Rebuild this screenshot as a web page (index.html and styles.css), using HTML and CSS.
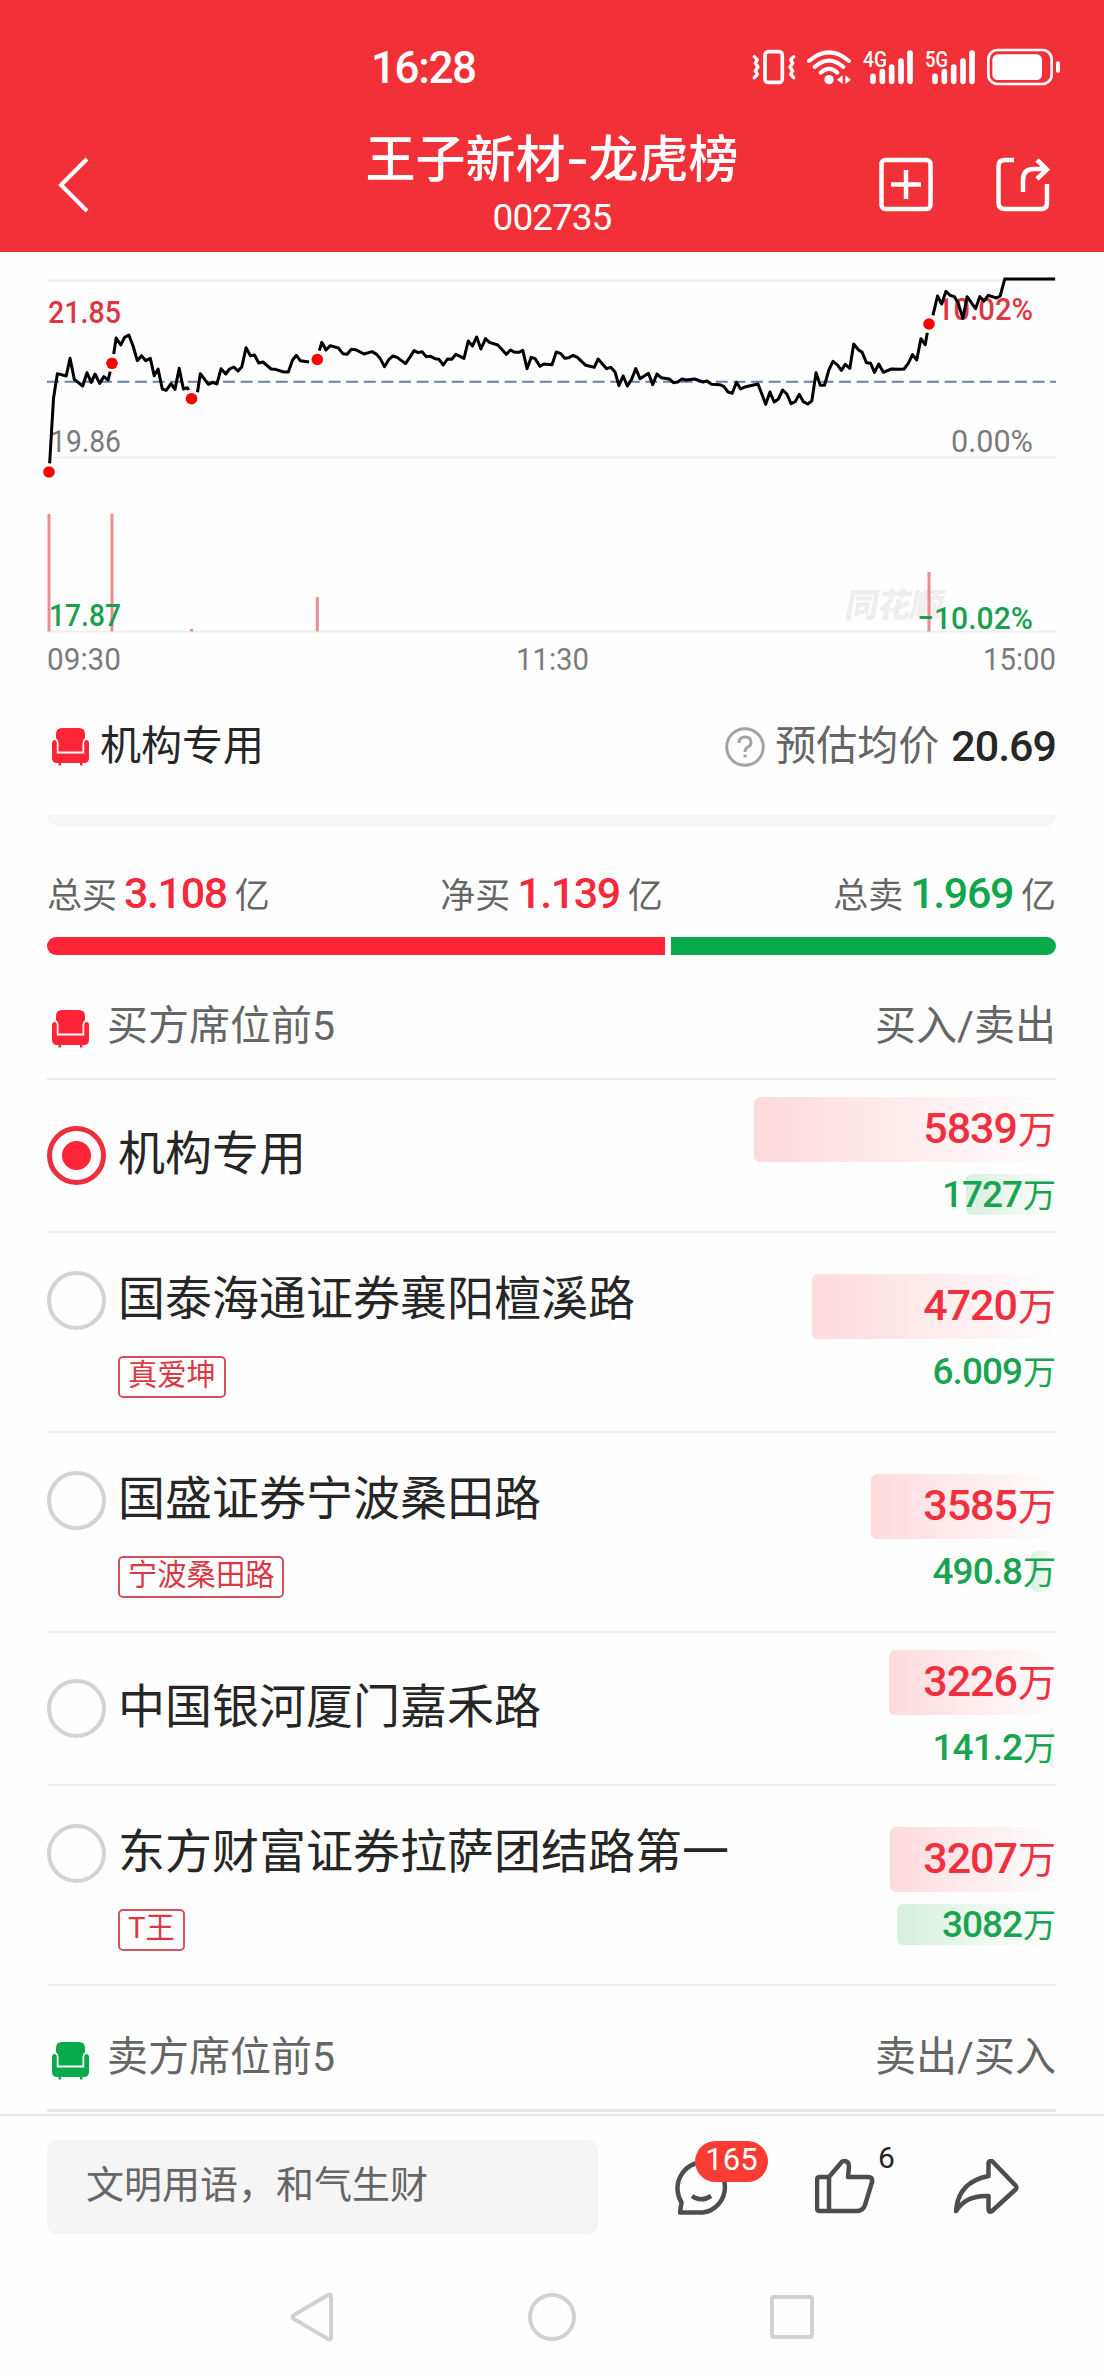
FILE: index.html
```
<!DOCTYPE html>
<html lang="zh-CN">
<head>
    <meta charset="UTF-8">
    <meta name="viewport" content="width=device-width, initial-scale=1.0">
    <title>王子新材-龙虎榜</title>
    <link rel="stylesheet" href="styles.css">
</head>
<body>
    <!-- shared armchair icon -->
    <svg class="defs" width="0" height="0">
        <symbol id="chair" viewBox="0 0 37 38">
            <path d="M4 10V6Q4 0 10 0H27Q33 0 33 6V10Q30.500 12 30.500 15V23.500H6.500V15Q6.500 12 4 10Z"/>
            <path d="M0 15.500Q0 12 2.500 12Q4.800 12 4.800 15.500V25.500H32.200V15.500Q32.200 12 34.500 12Q37 12 37 15.500V30Q37 35 32 35H30.500V37.500H28V35H9V37.500H6.500V35H5Q0 35 0 30Z"/>
        </symbol>
    </svg>

    <header class="header">
        <div class="status-bar">
            <span class="time">16:28</span>
            <svg class="status-icons" viewBox="36 50 930 124">
                <g fill="none" stroke="#fff" stroke-linecap="round" stroke-linejoin="round">
                    <rect x="75" y="66" width="52" height="92" rx="10" stroke-width="11"/>
                    <path d="M43 81l9 9-6 11 8 11-8 11 6 11-9 10M161 81l-9 9 6 11-8 11 8 11-6 11 9 10" stroke-width="10"/>
                    <path d="M207 94Q267 42 327 94M224 112Q267 74 310 112M242 129Q267 106 292 129" stroke-width="12"/>
                    <path d="M399 140v15M427 126v29M455 112v43M483 94v61M510 70v85M585 140v15M613 126v29M641 112v43M669 94v61M696 70v85" stroke-width="17"/>
                    <rect x="745" y="61" width="190" height="102" rx="28" stroke-width="8"/>
                    <path d="M954 101v22" stroke-width="12"/>
                </g>
                <g fill="#fff">
                    <circle cx="267" cy="150" r="14"/>
                    <path d="M291 150l17-13v26zM333 150l-17-13v26z"/>
                    <rect x="757" y="74" width="149" height="77" rx="16"/>
                    <text x="369" y="111" textLength="72" lengthAdjust="spacingAndGlyphs">4G</text>
                    <text x="555" y="111" textLength="69" lengthAdjust="spacingAndGlyphs">5G</text>
                </g>
            </svg>
        </div>
        <div class="title-bar">
            <svg class="back" viewBox="0 0 34 58"><path d="M31 3L5 29L31 55"/></svg>
            <div class="title">
                <h1>王子新材<span class="dash">-</span>龙虎榜</h1>
                <p>002735</p>
            </div>
            <div class="actions">
                <svg width="54" height="56" viewBox="0 0 54 56">
                    <rect x="2.500" y="3" width="49" height="49" rx="4"/>
                    <path d="M27 13v29M12 27.500h30"/>
                </svg>
                <svg width="54" height="56" viewBox="0 0 54 56">
                    <path d="M18 3H9Q2.500 3 2.500 9V46Q2.500 52 9 52H45Q51 52 51 46V27"/>
                    <path d="M27 35V23Q27 12 38 12H50M41 3L51 12.500L41 22"/>
                </svg>
            </div>
        </div>
    </header>

    <svg class="chart" viewBox="0 252 1104 438">
        <path class="grid" d="M47 280.500H1056M47 457.500H1056M47 631.500H1056"/>
        <g class="watermark"><text x="0" y="0" textLength="98" transform="translate(844 617) skewX(-10)">同花顺</text></g>
        <path class="avg" d="M47 381.700H1056"/>
        <g class="volume">
            <path d="M49 514V631.500M112 514V631.500M191.500 629V631.500M317.300 597V631.500M929 572V631.500"/>
        </g>
        <g class="label">
            <text class="up" x="48" y="322.500" textLength="73" lengthAdjust="spacingAndGlyphs">21.85</text>
            <text x="50" y="452" textLength="71" lengthAdjust="spacingAndGlyphs">19.86</text>
            <text class="down" x="49" y="626" textLength="72" lengthAdjust="spacingAndGlyphs">17.87</text>
            <text class="up" x="937" y="320" textLength="96" lengthAdjust="spacingAndGlyphs">10.02%</text>
            <text x="951" y="452" textLength="82" lengthAdjust="spacingAndGlyphs">0.00%</text>
            <text class="down" x="917" y="629" textLength="116" lengthAdjust="spacingAndGlyphs">−10.02%</text>
            <text x="47" y="669.500" textLength="74" lengthAdjust="spacingAndGlyphs">09:30</text>
            <text x="516" y="669.500" textLength="73" lengthAdjust="spacingAndGlyphs">11:30</text>
            <text x="983" y="669.500" textLength="73" lengthAdjust="spacingAndGlyphs">15:00</text>
        </g>
        <!-- price line, broken around each marker -->
        <g class="price" transform="translate(0 260) scale(.35205 .33333)">
            <polyline points="141,610 152,415 163,341 188,348 199,295 211,358 235,378 247,338 259,367 270,342 283,370 295,350 307,360 313,335"/>
            <polyline points="323,282 330,234 343,255 354,232 366,225 378,258 390,302 402,287 414,302 427,295 438,347 449,327 461,387 472,391 486,371 497,388 509,325 521,387 532,383 536,390"/>
            <polyline points="561,397 569,341 592,373 604,367 616,372 628,326 641,342 652,327 664,321 676,333 687,320 699,263 711,287 723,285 735,309 747,306 770,327 782,328 806,336 819,336 831,300 842,286 853,302 878,306"/>
            <polyline points="907,272 914,247 926,270 938,257 961,264 974,281 986,283 998,268 1010,269 1034,282 1057,275 1070,283 1080,296 1092,320 1104,299 1116,288 1128,292 1152,311 1164,292 1176,272 1188,278 1199,275 1211,290 1223,289 1236,296 1247,298 1259,315 1271,297 1283,298 1295,283 1318,295 1330,243 1342,258 1354,231 1366,267 1379,236 1390,247 1414,255 1438,283 1450,270 1462,277 1474,277 1485,271 1497,326 1509,292 1520,296 1534,319 1545,312 1568,314 1580,276 1593,281 1604,295 1616,293 1628,286 1640,292 1664,316 1688,322 1699,297 1723,326 1735,322 1747,336 1758,377 1770,348 1782,378 1794,358 1806,326 1818,356 1842,340 1854,374 1866,342 1878,353 1901,357 1913,368 1925,366 1937,357 1949,360 1973,357 1997,366 2008,363 2021,373 2044,374 2056,379 2068,396 2080,400 2092,367 2104,387 2116,381 2153,372 2164,402 2175,433 2187,396 2199,426 2211,417 2223,390 2235,402 2247,431 2259,425 2270,403 2282,425 2294,432 2306,423 2318,338 2330,376 2342,376 2354,331 2366,304 2378,314 2390,331 2401,313 2414,325 2425,252 2438,269 2449,277 2461,308 2473,310 2484,337 2496,312 2509,337 2532,327 2556,328 2568,327 2580,310 2592,284 2604,300 2616,236 2628,254 2634,218"/>
            <polyline points="2650,166 2663,108 2675,132 2687,94 2699,106 2711,110 2722,130 2735,175 2747,110 2771,146 2783,110 2795,123 2807,106 2831,114 2841,108 2854,57 2997,57"/>
        </g>
        <g fill="#fb0000">
            <circle cx="49" cy="472" r="5.800"/>
            <circle cx="112" cy="363.300" r="5.800"/>
            <circle cx="191.500" cy="398.700" r="5.800"/>
            <circle cx="317.300" cy="359.500" r="5.800"/>
            <circle cx="929" cy="324" r="5.800"/>
        </g>
    </svg>

    <main class="content">
        <div class="seat-head">
            <svg class="chair up"><use href="#chair"/></svg>
            <span class="seat-name">机构专用</span>
            <svg class="help" viewBox="0 0 40 40">
                <circle cx="20" cy="20" r="18.300"/>
                <path d="M14 16Q14 10 20 10Q26 10 26 15.500Q26 18.500 23 20Q20 21.500 20 25M20 27.500v3"/>
            </svg>
            <span class="avg-label">预估均价</span>
            <b class="avg-value">20.69</b>
        </div>
        <div class="band"></div>

        <div class="totals">
            <div>总买<b class="up">3.108</b>亿</div>
            <div>净买<b class="up">1.139</b>亿</div>
            <div>总卖<b class="down">1.969</b>亿</div>
        </div>
        <div class="ratio"><i class="buy"></i><i class="sell"></i></div>

        <div class="list-head">
            <svg class="chair up"><use href="#chair"/></svg>
            <span>买方席位前5</span>
            <span class="right">买入/卖出</span>
        </div>

        <ul class="seats">
            <li class="seat">
                <div class="who">
                    <div class="name"><i class="radio checked"></i><span>机构专用</span></div>
                </div>
                <div class="amounts">
                    <div class="in"><i style="width:302px"></i><b>5839</b>万</div>
                    <div class="out"><i style="width:90px"></i><b>1727</b>万</div>
                </div>
            </li>
            <li class="seat tagged">
                <div class="who">
                    <div class="name"><i class="radio"></i><span>国泰海通证券襄阳檀溪路</span></div>
                    <span class="tag">真爱坤</span>
                </div>
                <div class="amounts">
                    <div class="in"><i style="width:244px"></i><b>4720</b>万</div>
                    <div class="out"><b>6.009</b>万</div>
                </div>
            </li>
            <li class="seat tagged">
                <div class="who">
                    <div class="name"><i class="radio"></i><span>国盛证券宁波桑田路</span></div>
                    <span class="tag">宁波桑田路</span>
                </div>
                <div class="amounts">
                    <div class="in"><i style="width:185px"></i><b>3585</b>万</div>
                    <div class="out"><i style="width:25px"></i><b>490.8</b>万</div>
                </div>
            </li>
            <li class="seat">
                <div class="who">
                    <div class="name"><i class="radio"></i><span>中国银河厦门嘉禾路</span></div>
                </div>
                <div class="amounts">
                    <div class="in"><i style="width:167px"></i><b>3226</b>万</div>
                    <div class="out"><i style="width:7px"></i><b>141.2</b>万</div>
                </div>
            </li>
            <li class="seat tagged">
                <div class="who">
                    <div class="name"><i class="radio"></i><span>东方财富证券拉萨团结路第一</span></div>
                    <span class="tag">T王</span>
                </div>
                <div class="amounts">
                    <div class="in"><i style="width:166px"></i><b>3207</b>万</div>
                    <div class="out"><i style="width:159px"></i><b>3082</b>万</div>
                </div>
            </li>
        </ul>

        <div class="list-head last">
            <svg class="chair down"><use href="#chair"/></svg>
            <span>卖方席位前5</span>
            <span class="right">卖出/买入</span>
        </div>
    </main>

    <footer class="footer">
        <div class="comment-input">文明用语，和气生财</div>
        <div class="tool comment">
            <svg width="60" height="60" viewBox="0 0 60 60">
                <path d="M30 4A26.500 26.500 0 0 0 8.500 44.500L7 54.500H30A25.500 25.500 0 0 0 30 4Z"/>
                <path d="M19 38Q28 44.500 38 38"/>
            </svg>
            <span class="badge">165</span>
        </div>
        <div class="tool like">
            <svg width="60" height="56" viewBox="0 0 60 56">
                <path d="M14 18H5Q2 18 2 21V49Q2 52 5 52H42Q48 52 50 46L57 23Q58 18 53 18H33L34 8Q34 2 29 2Q27 2 25 5L14 18V52"/>
            </svg>
            <span class="count">6</span>
        </div>
        <div class="tool share">
            <svg width="66" height="56" viewBox="0 0 66 56">
                <path d="M37 2Q34.500 2 34.500 5V17Q4 23 2 52Q12 36 34.500 37V50Q34.500 54 38 52L61 31Q64 28.500 61 26L39 3Q38 2 37 2Z"/>
            </svg>
        </div>
    </footer>

    <nav class="sys-nav">
        <svg width="44" height="52" viewBox="0 0 44 52"><path d="M4 24L38 4Q41 2.500 41 6V46Q41 49.500 38 48L4 28Q1 26 4 24Z"/></svg>
        <svg width="50" height="50" viewBox="0 0 50 50"><circle cx="25" cy="25" r="22"/></svg>
        <svg width="46" height="46" viewBox="0 0 46 46"><rect x="3" y="3" width="40" height="40" rx="2"/></svg>
    </nav>
</body>
</html>
```
FILE: styles.css
```
* {
    box-sizing: border-box;
}
body {
    margin: 0;
    width: 1104px;
    height: 2376px;
    overflow: hidden;
    background: #fefefe;
    font-family: Roboto, "Noto Sans CJK SC", sans-serif;
    color: #262626;
    display: flex;
    flex-direction: column;
}
h1, p, ul {
    margin: 0;
    padding: 0;
}
i {
    display: block;
}
.defs {
    position: absolute;
}
.up {
    color: #f5293a;
    fill: #ff2436;
}
.down {
    color: #10a74c;
    fill: #08aa4b;
}

/* header */
.header {
    height: 252px;
    flex: none;
    background: #f23038;
    color: #fff;
}
.status-bar {
    height: 116px;
    padding: 20px 42px 0 371px;
    display: flex;
    align-items: center;
    justify-content: space-between;
}
.time {
    font-size: 44px;
    font-weight: 500;
    letter-spacing: -1.4px;
}
.status-icons {
    width: 310px;
    height: 42px;
    margin-top: -3px;
}
.status-icons text {
    font-size: 66px;
    font-weight: 500;
}
.title-bar {
    height: 136px;
    padding: 0 54px 0 56px;
    display: flex;
}
.back {
    width: 34px;
    height: 58px;
    margin-top: 40px;
    fill: none;
    stroke: #fff;
    stroke-width: 4;
}
.title {
    width: 500px;
    margin-left: 212px;
    text-align: center;
}
.title h1 {
    font-size: 50px;
    line-height: 60px;
    font-weight: 500;
    margin-top: 14px;
}
.title .dash {
    display: inline-block;
    width: 23px;
    transform: scaleX(1.3);
}
.title p {
    font-size: 37px;
    line-height: 44px;
    margin-top: 6px;
    letter-spacing: -1px;
}
.actions {
    display: flex;
    gap: 63px;
    margin-top: 41px;
    margin-left: auto;
    fill: none;
    stroke: #fff;
    stroke-width: 4.5;
}

/* intraday chart */
.chart {
    width: 1104px;
    height: 438px;
    flex: none;
}
.chart .grid {
    stroke: #efefef;
    stroke-width: 2;
}
.chart .avg {
    stroke: #6680ad;
    stroke-width: 2;
    stroke-dasharray: 12 5.6;
}
.chart .volume {
    stroke: #ea8c92;
    stroke-width: 3;
}
.chart .price {
    fill: none;
    stroke: #000;
    stroke-width: 3;
    stroke-linejoin: round;
}
.chart .price polyline {
    vector-effect: non-scaling-stroke;
}
.chart .label {
    font-size: 32px;
    fill: #7b7b7b;
}
.chart .label .up {
    fill: #dc3744;
    font-weight: 500;
}
.chart .label .down {
    fill: #1d9f50;
    font-weight: 500;
}
.chart .watermark {
    font-size: 33px;
    font-weight: 900;
    fill: #eee;
}

/* content */
.content {
    height: 1424px;
    flex: none;
    padding: 0 48px 0 47px;
}
.chair {
    width: 37px;
    height: 38px;
    margin-left: 5px;
}
.seat-head {
    height: 125px;
    padding-top: 26px;
    display: flex;
    align-items: flex-start;
    font-size: 41px;
    line-height: 60px;
}
.seat-head .chair {
    margin-top: 12px;
}
.seat-name {
    margin-left: 11px;
    margin-right: auto;
}
.help {
    width: 40px;
    height: 40px;
    margin: 11px 10px 0 0;
    fill: none;
    stroke: #a3a3a3;
    stroke-width: 3;
}
.avg-label {
    color: #666;
}
.avg-value {
    font-size: 43px;
    font-weight: 500;
    letter-spacing: -1px;
    margin-left: 12px;
}
.band {
    height: 11px;
    background: #f7f7f7;
    border-radius: 0 0 11px 11px;
}
.totals {
    height: 111px;
    padding-top: 39px;
    display: flex;
    justify-content: space-between;
    font-size: 35px;
    line-height: 56px;
    color: #666;
}
.totals b {
    font-size: 43px;
    font-weight: 500;
    letter-spacing: -1.4px;
    margin: 0 8px 0 7px;
}
.ratio {
    display: flex;
    gap: 6px;
    height: 18px;
}
.ratio i {
    height: 18px;
}
.ratio .buy {
    width: 618px;
    background: #ff2436;
    border-radius: 9px 0 0 9px;
}
.ratio .sell {
    flex: 1;
    background: #08aa4b;
    border-radius: 0 9px 9px 0;
}
.list-head {
    height: 125px;
    padding-top: 41px;
    display: flex;
    align-items: flex-start;
    gap: 18px;
    font-size: 41px;
    line-height: 60px;
    color: #666;
    border-bottom: 2px solid #ebebeb;
}
.list-head .chair {
    margin-top: 14px;
}
.list-head .right {
    margin-left: auto;
}
.list-head.last {
    padding-top: 41px;
    height: 126px;
    border-bottom: 3px solid #e8e8e8;
}
.list-head.last .chair {
    margin-top: 15px;
}

/* seat rows */
.seats {
    list-style: none;
}
.seat {
    height: 153px;
    border-bottom: 2px solid #efefef;
    display: flex;
    justify-content: space-between;
    align-items: center;
}
.seat.tagged {
    height: 200px;
}
.seat.tagged .who {
    align-self: flex-start;
    margin-top: 38px;
}
.name {
    display: flex;
    align-items: center;
    gap: 12px;
    height: 59px;
    font-size: 47px;
    line-height: 59px;
}
.name span {
    margin-top: -5px;
}
.radio {
    width: 59px;
    height: 59px;
    border: 4px solid #d3d3d3;
    border-radius: 50%;
}
.radio.checked {
    border: 5px solid #eb2f3d;
    background: radial-gradient(circle, #ff2436 14px, transparent 15px);
}
.tag {
    display: block;
    width: fit-content;
    height: 42px;
    margin: 26px 0 0 71px;
    padding: 0 8px;
    border: 2px solid #d8505a;
    border-radius: 5px;
    font-size: 29.3px;
    line-height: 35px;
    color: #dc3744;
}
.amounts {
    width: 302px;
    margin-top: 1px;
    text-align: right;
}
.in, .out {
    display: flex;
    justify-content: flex-end;
    align-items: baseline;
    position: relative;
}
.in i, .out i {
    position: absolute;
    right: 0;
    top: 0;
    height: 100%;
    z-index: -1;
    border-radius: 6px 0 0 6px;
}
.in b, .out b {
    font-weight: 500;
    letter-spacing: -1px;
    margin-right: 1px;
}
.in {
    height: 65px;
    line-height: 63px;
    font-size: 38px;
    color: #f0303f;
}
.in i {
    background: linear-gradient(90deg, #ffdadd, #fefefe);
}
.in b {
    font-size: 43px;
}
.out {
    height: 41px;
    line-height: 41px;
    margin-top: 12px;
    font-size: 33px;
    color: #1aa351;
}
.out i {
    background: linear-gradient(90deg, #d8f1de, #fefefe);
}
.out b {
    font-size: 37px;
}

/* bottom bar */
.footer {
    height: 148px;
    flex: none;
    padding: 24px 0 0 47px;
    border-top: 2px solid #e9e9e9;
    display: flex;
}
.comment-input {
    width: 551px;
    height: 94px;
    padding-left: 39px;
    border-radius: 10px;
    background: #f5f5f5;
    font-size: 38px;
    line-height: 90px;
    color: #666;
}
.tool {
    position: relative;
    fill: none;
    stroke: #4d4d4d;
    stroke-width: 4.5;
    stroke-linejoin: round;
}
.tool.comment {
    margin: 18px 0 0 75px;
}
.tool.like {
    margin: 19px 0 0 82px;
}
.tool.share {
    margin: 19px 0 0 79px;
}
.badge {
    position: absolute;
    left: 22px;
    top: -17px;
    width: 73px;
    height: 41px;
    border-radius: 21px;
    background: #fb3c34;
    color: #fff;
    font-size: 31px;
    line-height: 38px;
    text-align: center;
}
.count {
    position: absolute;
    left: 63px;
    top: -17px;
    font-size: 30px;
    line-height: 32px;
}
.sys-nav {
    flex: none;
    height: 110px;
    padding: 0 289px 0 290px;
    display: flex;
    justify-content: space-between;
    align-items: center;
    fill: none;
    stroke: #d1d1d1;
    stroke-width: 4;
}
```
